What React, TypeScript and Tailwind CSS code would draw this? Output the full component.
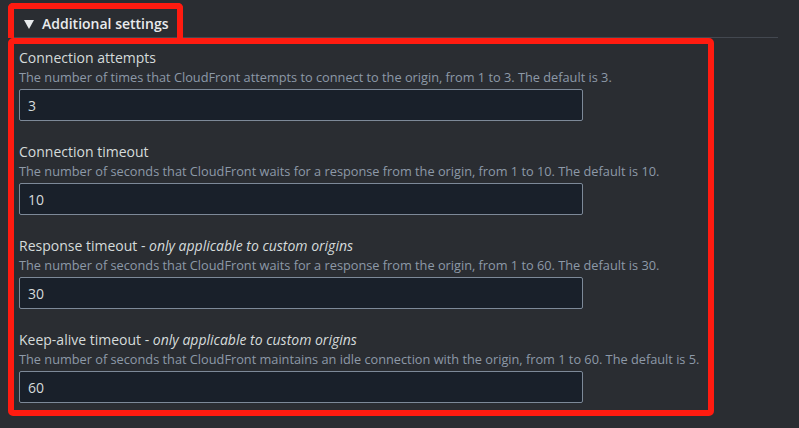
import React from "react";

const fields = [
  {
    label: "Connection attempts",
    note: "",
    desc: "The number of times that CloudFront attempts to connect to the origin, from 1 to 3. The default is 3.",
    value: "3",
  },
  {
    label: "Connection timeout",
    note: "",
    desc: "The number of seconds that CloudFront waits for a response from the origin, from 1 to 10. The default is 10.",
    value: "10",
  },
  {
    label: "Response timeout",
    note: "only applicable to custom origins",
    desc: "The number of seconds that CloudFront waits for a response from the origin, from 1 to 60. The default is 30.",
    value: "30",
  },
  {
    label: "Keep-alive timeout",
    note: "only applicable to custom origins",
    desc: "The number of seconds that CloudFront maintains an idle connection with the origin, from 1 to 60. The default is 5.",
    value: "60",
  },
];

export default function App() {
  return (
    <div
      className="w-[799px] h-[428px] bg-[#2a2d32] overflow-hidden pt-[3px] pl-[8px]"
      style={{ fontFamily: '"Open Sans", "Noto Sans", sans-serif' }}
    >
      <div className="relative">
        {/* section underline, mostly hidden behind the highlight */}
        <div className="absolute left-0 top-[34px] w-[770px] h-px bg-[#434850]" />
        <div className="relative w-[175px] h-[35px] border-[6px] border-b-0 border-[#ff1b10] rounded-t-[5px] flex items-center pl-[10px] gap-[8px]">
          <svg width="10" height="9" viewBox="0 0 10 9" className="mt-[1px]">
            <polygon points="0,0 10,0 5,9" fill="#e9ebed" />
          </svg>
          <span className="text-[14px] font-semibold text-[#e9ebed]">Additional settings</span>
        </div>
        <div className="relative w-[706px] h-[378px] border-[6px] border-[#ff1b10] rounded-[5px] pt-[4px] pl-[5px] flex flex-col gap-[21px]">
          {fields.map((f) => (
            <div key={f.label} className="flex flex-col">
              <div className="text-[14px] leading-[20px] text-[#d5dbdb]">
                {f.label}
                {f.note && (
                  <>
                    {" - "}
                    <i>{f.note}</i>
                  </>
                )}
              </div>
              <div className="text-[12.75px] leading-[18px] text-[#8d99a8] whitespace-nowrap">{f.desc}</div>
              <input
                readOnly
                value={f.value}
                className="mt-[3px] w-[564px] h-[32px] bg-[#19202a] border border-[#7d8998] rounded-[2px] px-[8px] text-[14px] text-[#d5dbdb] outline-none"
              />
            </div>
          ))}
        </div>
      </div>
    </div>
  );
}
